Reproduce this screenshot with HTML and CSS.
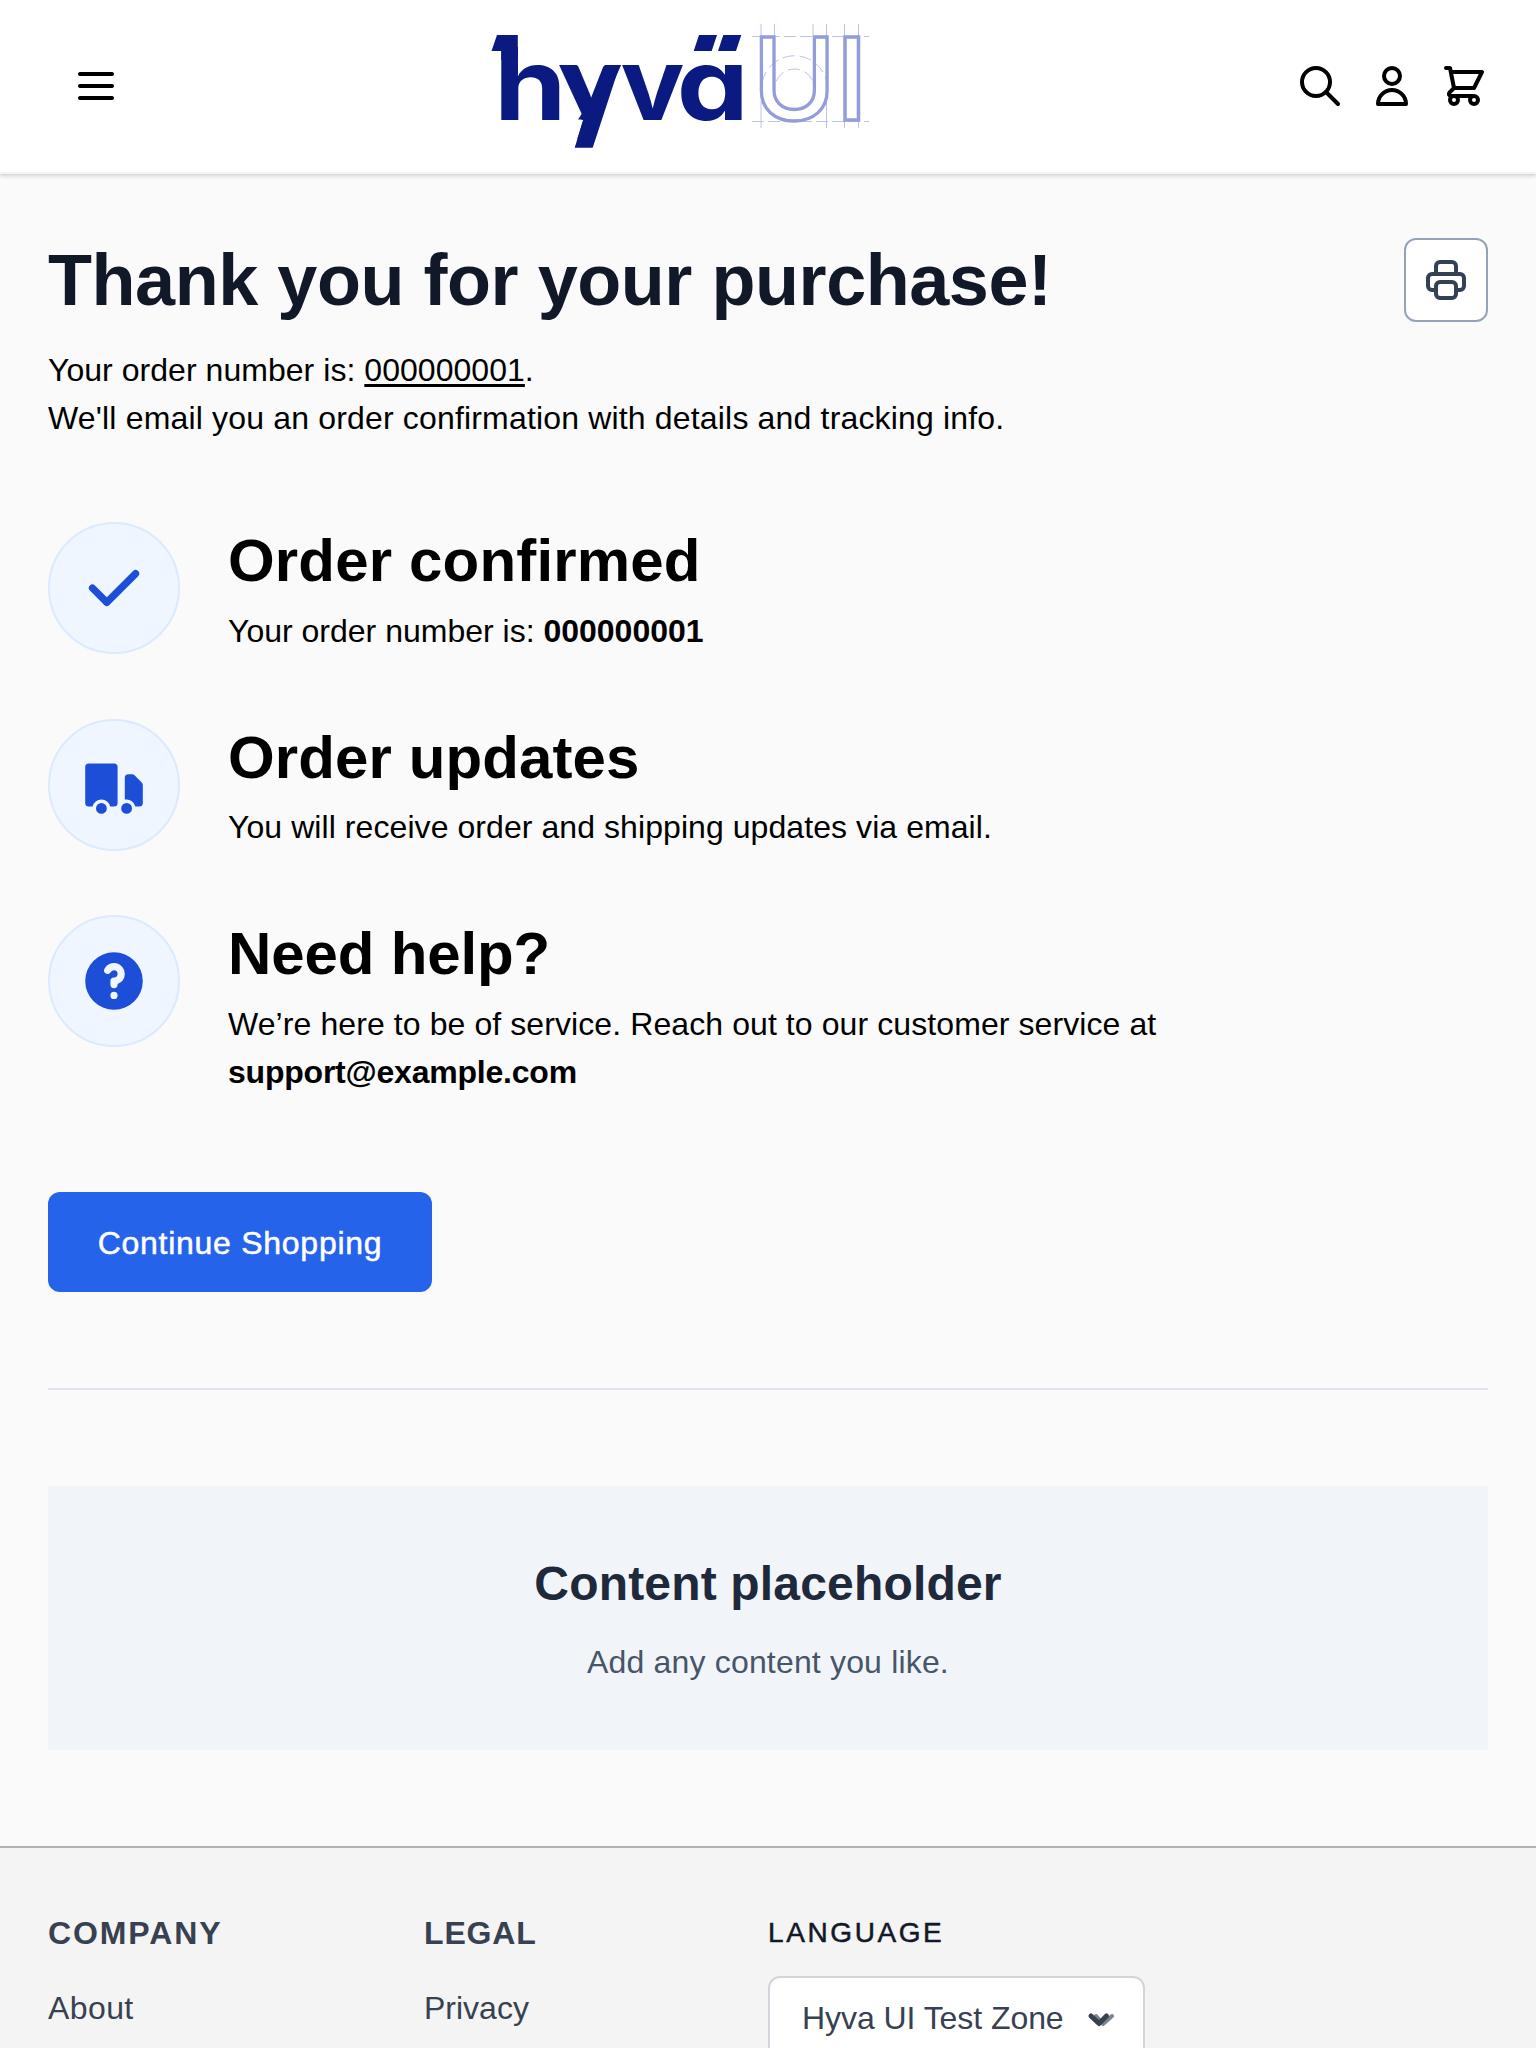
FILE: index.html
```html
<!DOCTYPE html>
<html lang="en">
<head>
<meta charset="utf-8">
<title>Thank you for your purchase!</title>
<link rel="stylesheet" href="styles.css">
</head>
<body>
<header class="site-header">
  <button class="icon-button" aria-label="Menu">
    <svg width="48" height="48" viewBox="0 0 24 24" class="stroke-icon"><path d="M4 6h16M4 12h16M4 18h16"/></svg>
  </button>
  <a class="logo" aria-label="Hyvä UI">
    <svg width="388" height="172" viewBox="486 0 388 172">
      <clipPath id="tail"><path d="M555 65H625V160H570.800L583.300 120L555 110Z"/></clipPath>
      <g class="logo-word">
        <path d="M497 35H517.800V60H501.300V51H491.500Z"/>
        <text class="logo-inter" x="494" y="119.500" textLength="72.500" lengthAdjust="spacingAndGlyphs">h</text>
        <text class="logo-lato" clip-path="url(#tail)" x="560" y="119.500" textLength="60" lengthAdjust="spacingAndGlyphs">y</text>
        <path d="M578 119.500L583 112L600 100L619.500 66L592.700 147.700H574.700L583.300 119.500Z"/>
        <text class="logo-inter" x="620.500" y="119.500" textLength="64" lengthAdjust="spacingAndGlyphs">v</text>
        <text class="logo-inter" x="676.700" y="119.500" textLength="72" lengthAdjust="spacingAndGlyphs">a</text>
        <path d="M699 35H717L711.700 51H693.700ZM723.300 35H741.300L736 51H718Z"/>
      </g>
      <g class="logo-guides">
        <path d="M761 24v12M774.500 24v12M813 24v12M826.500 24v12M844.500 24v12M858.500 24v12M761 101v27M826.500 101v27M844.500 118v10M858.500 118v10"/>
        <path stroke-dasharray="12 4" d="M752 36.500h117M752 121.500h117"/>
        <path stroke-dasharray="12 5" d="M762 83a33 33 0 0 1 65 0M776 81.400a20 20 0 0 1 37 0"/>
      </g>
      <g class="logo-outline">
        <text x="752.200" y="119.700" textLength="84" lengthAdjust="spacingAndGlyphs">U</text>
        <text x="835.300" y="119.700" textLength="33" lengthAdjust="spacingAndGlyphs">I</text>
      </g>
    </svg>
  </a>
  <nav class="header-tools">
    <svg width="48" height="48" viewBox="0 0 24 24" class="stroke-icon"><circle cx="10" cy="10" r="7"/><path d="m15 15 6 6"/></svg>
    <svg width="48" height="48" viewBox="0 0 24 24" class="stroke-icon"><path d="M16 7a4 4 0 1 1-8 0 4 4 0 0 1 8 0zM12 14a7 7 0 0 0-7 7h14a7 7 0 0 0-7-7z"/></svg>
    <svg width="48" height="48" viewBox="0 0 24 24" class="stroke-icon"><path d="M3 3h2l.4 2M7 13h10l4-8H5.400M7 13L5.400 5M7 13l-2.293 2.293c-.630.630-.184 1.707.707 1.707H17m0 0a2 2 0 1 0 0 4 2 2 0 0 0 0-4zm-8 2a2 2 0 1 1-4 0 2 2 0 0 1 4 0z"/></svg>
  </nav>
</header>
<main class="page">
  <div class="title-row">
    <h1>Thank you for your purchase!</h1>
    <button class="print" aria-label="Print">
      <svg width="48" height="48" viewBox="0 0 24 24" class="stroke-icon"><path d="M17 17h2a2 2 0 0 0 2-2v-4a2 2 0 0 0-2-2H5a2 2 0 0 0-2 2v4a2 2 0 0 0 2 2h2m2 4h6a2 2 0 0 0 2-2v-4a2 2 0 0 0-2-2H9a2 2 0 0 0-2 2v4a2 2 0 0 0 2 2zm8-12V5a2 2 0 0 0-2-2H9a2 2 0 0 0-2 2v4h10z"/></svg>
    </button>
  </div>
  <div class="intro">
    <p class="intro-order">Your order number is: <a class="order-link">000000001</a>.</p>
    <p class="intro-mail">We'll email you an order confirmation with details and tracking info.</p>
  </div>
  <ul class="steps">
    <li class="step">
      <span class="badge"><svg width="72" height="72" viewBox="0 0 20 20"><path fill-rule="evenodd" d="M16.707 5.293a1 1 0 0 1 0 1.414l-8 8a1 1 0 0 1-1.414 0l-4-4a1 1 0 0 1 1.414-1.414L8 12.586l7.293-7.293a1 1 0 0 1 1.414 0z"/></svg></span>
      <div class="step-text"><h2 class="t-confirmed">Order confirmed</h2><p>Your order number is: <strong>000000001</strong></p></div>
    </li>
    <li class="step">
      <span class="badge"><svg width="72" height="72" viewBox="0 0 20 20"><path d="M8 16.500a1.500 1.500 0 1 1-3 0 1.500 1.500 0 0 1 3 0zM15 16.500a1.500 1.500 0 1 1-3 0 1.500 1.500 0 0 1 3 0z"/><path d="M3 4a1 1 0 0 0-1 1v10a1 1 0 0 0 1 1h1.050a2.500 2.500 0 0 1 4.900 0H10a1 1 0 0 0 1-1V5a1 1 0 0 0-1-1H3zM14 7a1 1 0 0 0-1 1v6.050a2.500 2.500 0 0 1 2.950 1.950H17a1 1 0 0 0 1-1v-5a1 1 0 0 0-.293-.707l-2-2A1 1 0 0 0 15 7h-1z"/></svg></span>
      <div class="step-text"><h2 class="t-updates">Order updates</h2><p class="p-updates">You will receive order and shipping updates via email.</p></div>
    </li>
    <li class="step">
      <span class="badge"><svg width="72" height="72" viewBox="0 0 20 20"><path fill-rule="evenodd" d="M18 10a8 8 0 1 1-16 0 8 8 0 0 1 16 0zm-8-3a1 1 0 0 0-.867.500 1 1 0 1 1-1.731-1A3 3 0 0 1 13 8a3.001 3.001 0 0 1-2 2.830V11a1 1 0 1 1-2 0v-1a1 1 0 0 1 1-1 1 1 0 1 0 0-2zm0 8a1 1 0 1 0 0-2 1 1 0 0 0 0 2z"/></svg></span>
      <div class="step-text"><h2 class="t-help">Need help?</h2><p class="p-help">We’re here to be of service. Reach out to our customer service at<br><strong class="mail">support@example.com</strong></p></div>
    </li>
  </ul>
  <a class="continue">Continue Shopping</a>
  <hr>
  <section class="placeholder">
    <h3>Content placeholder</h3>
    <p>Add any content you like.</p>
  </section>
</main>
<footer class="site-footer">
  <div class="col-company"><h4>COMPANY</h4><a>About</a></div>
  <div class="col-legal"><h4>LEGAL</h4><a>Privacy</a></div>
  <div class="col-language">
    <h5>LANGUAGE</h5>
    <button class="select"><span>Hyva UI Test Zone</span>
      <svg width="28" height="16" viewBox="0 0 28 16"><path class="chev-back" d="M9 5l7 8 9-8"/><path class="chev" d="M4 5l8 7.500 7.500-7.500"/></svg>
    </button>
  </div>
</footer>
</body>
</html>
```
FILE: styles.css
```css
* { box-sizing: border-box; }
body, h1, h2, h3, h4, h5, p, ul { margin: 0; padding: 0; }
body { height: 2048px; overflow: hidden; display: flex; flex-direction: column; background: #fafafa; color: #000; font: 32px/48px "Liberation Sans", Arial, sans-serif; }
button { font: inherit; color: inherit; letter-spacing: inherit; padding: 0; border: 0; background: none; }
svg { display: block; flex: none; }
.stroke-icon { fill: none; stroke: currentColor; stroke-width: 2; stroke-linecap: round; stroke-linejoin: round; }

.site-header { flex: none; display: grid; grid-template-columns: 414px auto 1fr; align-items: center; height: 174px; padding: 0 48px 0 72px; background: #fff; border-bottom: 2px solid #f4f4f4; box-shadow: 0 2px 4px rgba(0, 0, 0, .16); }
.icon-button { justify-self: start; }
.header-tools { display: flex; justify-content: flex-end; gap: 24px; }
.logo-word { fill: #0a1a80; }
.logo-inter { font: 700 100px Inter, sans-serif; font-feature-settings: "cv11" 1; }
.logo-lato { font: 900 106px Lato, sans-serif; stroke: #0a1a80; stroke-width: 1.5; }
.logo-guides { fill: none; stroke: #bcc2e8; stroke-width: 1; }
.logo-outline { fill: none; stroke: #939ddb; stroke-width: 3.3; font: 530 114px Inter, sans-serif; }

.page { flex: none; padding: 64px 48px 96px; }
.title-row { display: flex; justify-content: space-between; align-items: center; height: 84px; }
h1 { font-size: 72px; line-height: 84px; letter-spacing: -.45px; color: #111827; white-space: nowrap; }
.print { display: grid; place-items: center; width: 84px; height: 84px; background: #fff; border: 2px solid #94a3b8; border-radius: 12px; color: #334155; }
.intro { margin-top: 24px; }
.intro-order { letter-spacing: .04px; }
.intro-mail { letter-spacing: .17px; }
.order-link { text-decoration: underline; text-decoration-thickness: 3px; text-underline-offset: 3px; }
.steps { list-style: none; margin-top: 80px; display: flex; flex-direction: column; gap: 64px; }
.step { display: flex; gap: 48px; min-height: 132.500px; }
.badge { flex: none; display: grid; place-items: center; width: 132px; height: 132px; border: 2px solid #dbeafe; border-radius: 50%; background: #eff6ff; }
.badge svg { fill: #1d4ed8; }
.step-text { padding-top: 3px; }
h2 { font-size: 60px; line-height: 72px; margin-bottom: 9.500px; }
.t-confirmed { letter-spacing: .17px; }
.t-updates { letter-spacing: .1px; }
.t-help { letter-spacing: -.13px; }
.p-updates { letter-spacing: .07px; }
.p-help { letter-spacing: .09px; }
.mail { letter-spacing: -.22px; }
.continue { display: flex; align-items: center; justify-content: center; width: 384px; height: 100px; margin-top: 96.500px; padding-top: 2px; background: #2563eb; border-radius: 12px; color: #fff; letter-spacing: .73px; -webkit-text-stroke: .5px #fff; }
hr { height: 2px; margin: 96px 0; border: 0; background: #e2e4ee; }
.placeholder { height: 264px; padding-top: 63px; background: #f1f5f9; text-align: center; color: #475569; letter-spacing: .17px; }
h3 { font-size: 48px; line-height: 70px; color: #1e293b; margin-bottom: 19px; }

.site-footer { flex: 1; display: grid; grid-template-columns: 376px 344px 1fr; padding: 61px 48px 0; border-top: 2px solid #b0b2b6; background: #f4f4f4; color: #374151; }
h4 { font-size: 32px; line-height: 48px; margin-bottom: 27px; letter-spacing: 1.9px; }
.col-company { letter-spacing: .4px; }
.col-legal h4 { letter-spacing: .85px; }
h5 { font-size: 28px; line-height: 48px; font-weight: 400; color: #111827; letter-spacing: 2.6px; -webkit-text-stroke: .5px #111827; margin-bottom: 19px; }
.select { display: flex; align-items: center; justify-content: space-between; width: 377px; height: 84px; padding: 0 28px 0 32px; background: #fff; border: 2px solid #d1d5db; border-radius: 12px; letter-spacing: -.06px; }
.select svg { margin-top: 2px; }
.chev, .chev-back { fill: none; stroke: #374151; stroke-width: 5; stroke-linecap: round; stroke-linejoin: round; }
.chev-back { stroke: #7b828e; stroke-width: 4; }
```
